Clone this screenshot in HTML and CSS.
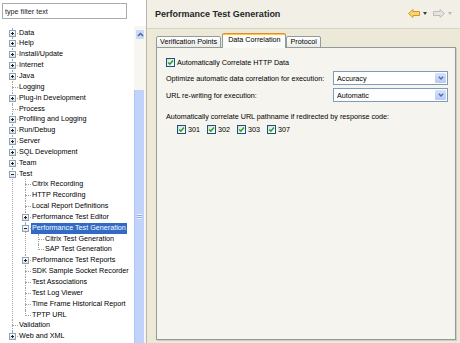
FILE: index.html
```html
<!DOCTYPE html>
<html lang="en">
<head>
  <meta charset="UTF-8" />
  <title>Preferences - Performance Test Generation</title>
  <link rel="stylesheet" href="styles.css">
</head>
<body>
  <div class="window">
    <div class="nav-pane">
      <input class="filter" type="text" value="type filter text" />
      <div class="tree-area">
        <ul class="tree">
          <li><span class="exp"></span>Data</li>
          <li><span class="exp"></span>Help</li>
          <li><span class="exp"></span>Install/Update</li>
          <li><span class="exp"></span>Internet</li>
          <li><span class="exp"></span>Java</li>
          <li>Logging</li>
          <li><span class="exp"></span>Plug-in Development</li>
          <li>Process</li>
          <li><span class="exp"></span>Profiling and Logging</li>
          <li><span class="exp"></span>Run/Debug</li>
          <li><span class="exp"></span>Server</li>
          <li><span class="exp"></span>SQL Development</li>
          <li><span class="exp"></span>Team</li>
          <li><span class="exp minus"></span>Test
            <ul>
              <li>Citrix Recording</li>
              <li>HTTP Recording</li>
              <li>Local Report Definitions</li>
              <li><span class="exp"></span>Performance Test Editor</li>
              <li><span class="exp minus"></span><span class="sel">Performance Test Generation</span>
                <ul>
                  <li>Citrix Test Generation</li>
                  <li>SAP Test Generation</li>
                </ul>
              </li>
              <li><span class="exp"></span>Performance Test Reports</li>
              <li>SDK Sample Socket Recorder</li>
              <li>Test Associations</li>
              <li>Test Log Viewer</li>
              <li>Time Frame Historical Report</li>
              <li>TPTP URL</li>
            </ul>
          </li>
          <li>Validation</li>
          <li><span class="exp"></span>Web and XML</li>
        </ul>
        <div class="vscroll">
          <div class="vscroll-btn">
            <svg width="7" height="5" viewBox="0 0 7 5"><polyline points="1,4 3.5,1.5 6,4" fill="none" stroke="#4d6185" stroke-width="1.4"/></svg>
          </div>
          <div class="vscroll-thumb"><span class="grip"></span></div>
        </div>
      </div>
    </div>

    <div class="page-pane">
      <div class="page-header">
        <h1>Performance Test Generation</h1>
        <div class="page-nav">
          <svg width="12" height="9" viewBox="0 0 12 9"><polygon points="0.5,4.5 5,0.5 5,2.5 11.5,2.5 11.5,6.5 5,6.5 5,8.5" fill="#f8d56e" stroke="#d09a2a" stroke-width="1"/></svg>
          <svg class="drop" width="4" height="3" viewBox="0 0 4 3"><polygon points="0,0 4,0 2,3" fill="#3a3a3a"/></svg>
          <svg width="12" height="9" viewBox="0 0 12 9"><polygon points="11.5,4.5 7,0.5 7,2.5 0.5,2.5 0.5,6.5 7,6.5 7,8.5" fill="#e4e4e4" stroke="#bdbdbd" stroke-width="1"/></svg>
          <svg class="drop" width="4" height="3" viewBox="0 0 4 3"><polygon points="0,0 4,0 2,3" fill="#b8b8b8"/></svg>
        </div>
      </div>

      <div class="page-body">
        <div class="tabs">
          <div class="tab">Verification Points</div>
          <div class="tab active">Data Correlation</div>
          <div class="tab">Protocol</div>
        </div>
        <div class="tab-panel">
          <label class="check">
            <span class="cb"><svg width="7" height="7" viewBox="0 0 7 7"><polyline points="1.2,3.4 2.9,5.2 6,1.6" fill="none" stroke="#21a121" stroke-width="1.5"/></svg></span>
            Automatically Correlate HTTP Data
          </label>

          <div class="options">
            <span>Optimize automatic data correlation for execution:</span>
            <div class="combo">Accuracy<span class="combo-btn"><svg width="6" height="4" viewBox="0 0 6 4"><polyline points="0.8,0.8 3,3 5.2,0.8" fill="none" stroke="#4d6ca6" stroke-width="1.3"/></svg></span></div>
            <span>URL re-writing for execution:</span>
            <div class="combo">Automatic<span class="combo-btn"><svg width="6" height="4" viewBox="0 0 6 4"><polyline points="0.8,0.8 3,3 5.2,0.8" fill="none" stroke="#4d6ca6" stroke-width="1.3"/></svg></span></div>
          </div>

          <div class="redirect-label">Automatically correlate URL pathname if redirected by response code:</div>
          <div class="codes">
            <label class="check"><span class="cb"><svg width="7" height="7" viewBox="0 0 7 7"><polyline points="1.2,3.4 2.9,5.2 6,1.6" fill="none" stroke="#21a121" stroke-width="1.5"/></svg></span>301</label>
            <label class="check"><span class="cb"><svg width="7" height="7" viewBox="0 0 7 7"><polyline points="1.2,3.4 2.9,5.2 6,1.6" fill="none" stroke="#21a121" stroke-width="1.5"/></svg></span>302</label>
            <label class="check"><span class="cb"><svg width="7" height="7" viewBox="0 0 7 7"><polyline points="1.2,3.4 2.9,5.2 6,1.6" fill="none" stroke="#21a121" stroke-width="1.5"/></svg></span>303</label>
            <label class="check"><span class="cb"><svg width="7" height="7" viewBox="0 0 7 7"><polyline points="1.2,3.4 2.9,5.2 6,1.6" fill="none" stroke="#21a121" stroke-width="1.5"/></svg></span>307</label>
          </div>
        </div>
      </div>
    </div>
  </div>
</body>
</html>
```

FILE: styles.css
```css
* {
  box-sizing: border-box;
}

body {
  margin: 0;
  font-family: 'Liberation Sans', Arial, sans-serif;
  font-size: 7.2px;
  color: #000;
  background: #ece9d8;
}

.window {
  display: flex;
  width: 460px;
  height: 343px;
  overflow: hidden;
}

/* left: filter + preference tree */
.nav-pane {
  width: 146px;
  display: flex;
  flex-direction: column;
  background: #fff;
}

.filter {
  margin: 3px 19px 0 2px;
  height: 16px;
  padding: 0 2px;
  border: 1px solid #a5acb2;
  font-family: inherit;
  font-size: 7.2px;
  color: #222;
  outline: none;
}

.tree-area {
  flex: 1;
  display: flex;
  margin-top: 7px;
  min-height: 0;
}

.tree, .tree ul {
  list-style: none;
  margin: 0;
  padding: 0;
}

.tree {
  flex: 1;
  padding: 1.6px 0 0 6px;
  overflow: hidden;
  white-space: nowrap;
}

.tree li {
  position: relative;
  padding-left: 13px;
  line-height: 10.85px;
}

.tree li::before {
  content: "";
  position: absolute;
  left: 6px;
  top: 5px;
  width: 6px;
  border-top: 1px dotted #a3a3a3;
}

.tree li::after {
  content: "";
  position: absolute;
  left: 6px;
  top: 0;
  bottom: 0;
  border-left: 1px dotted #a3a3a3;
}

.tree li:last-child::after {
  bottom: auto;
  height: 6px;
}

.exp {
  position: absolute;
  left: 3px;
  top: 2px;
  width: 7px;
  height: 7px;
  z-index: 1;
  border: 1px solid #8ba3bf;
  background:
    linear-gradient(#222, #222) center / 3px 1px no-repeat,
    linear-gradient(#222, #222) center / 1px 3px no-repeat,
    linear-gradient(#fff, #e3e0d6);
}

.exp.minus {
  background:
    linear-gradient(#222, #222) center / 3px 1px no-repeat,
    linear-gradient(#fff, #e3e0d6);
}

.sel {
  display: inline-block;
  margin-left: -1px;
  padding: 0 1px;
  background: #316ac5;
  color: #fff;
}

.vscroll {
  width: 12px;
  display: flex;
  flex-direction: column;
  background: #f7f6f1;
}

.vscroll-btn {
  margin: 4px 2px 0 2px;
  height: 9px;
  border-radius: 1px;
  background: #c9d8fb;
  display: flex;
  align-items: center;
  justify-content: center;
}

.vscroll-thumb {
  flex: 1;
  margin: 51px 2px 0 0;
  background: #c1d3fb;
  border-left: 1px solid #b2c6f3;
  display: flex;
  align-items: center;
  justify-content: center;
}

.grip {
  width: 5px;
  height: 5px;
  background: repeating-linear-gradient(#eef3ff 0 1px, #8ea8e0 1px 2px);
}

/* right: preference page */
.page-pane {
  flex: 1;
  display: flex;
  flex-direction: column;
  border-left: 1px solid #b9b6a6;
}

.page-header {
  height: 29px;
  display: flex;
  align-items: center;
  justify-content: space-between;
  padding: 0 5px 1px 8px;
  background: #f1efe6;
  border-bottom: 1px solid #d8d4c4;
}

.page-header h1 {
  margin: 0;
  font-size: 9px;
  font-weight: bold;
  color: #262626;
}

.page-nav {
  display: flex;
  align-items: center;
  gap: 3px;
}

.page-nav .drop {
  margin-right: 3px;
}

.page-body {
  flex: 1;
  display: flex;
  flex-direction: column;
  padding: 4px 4px 3px 9px;
}

.tabs {
  display: flex;
  align-items: flex-end;
  margin-bottom: -1px;
  position: relative;
}

.tab {
  height: 12px;
  padding: 0 3px;
  line-height: 10px;
  border: 1px solid #919b9c;
  border-radius: 2px 2px 0 0;
  background: linear-gradient(#fff, #ecebe6);
}

.tab + .tab {
  margin-left: -1px;
}

.tab.active {
  height: 15px;
  margin-left: 1px;
  padding: 0 5px;
  line-height: 11px;
  border-top: 1px solid #e68b2c;
  border-bottom: none;
  box-shadow: inset 0 1px #ffc73c;
  background: #fbfbf9;
  position: relative;
  z-index: 1;
}

.tab.active + .tab {
  margin-left: 0;
}

.tab-panel {
  flex: 1;
  padding: 9px 7px 0 9px;
  border: 1px solid #919b9c;
  background: #f5f4ef;
  box-shadow: 1px 1px 0 #d0cdc0;
}

.check {
  display: flex;
  align-items: center;
  gap: 2px;
  height: 10px;
}

.cb {
  width: 9px;
  height: 9px;
  border: 1px solid #1c5180;
  background: linear-gradient(135deg, #dcdcd7, #fff);
  display: flex;
  align-items: center;
  justify-content: center;
}

.options {
  display: grid;
  grid-template-columns: 1fr 115px;
  row-gap: 3px;
  align-items: center;
  margin-top: 4px;
}

.combo {
  height: 14px;
  display: flex;
  align-items: center;
  justify-content: space-between;
  padding: 0 1px 0 3px;
  border: 1px solid #7f9db9;
  background: #fff;
}

.combo-btn {
  width: 11px;
  height: 10px;
  border-radius: 1px;
  background: linear-gradient(#d6e1fb, #b8cbf5);
  display: flex;
  align-items: center;
  justify-content: center;
}

.redirect-label {
  margin-top: 10px;
  line-height: 10px;
}

.codes {
  display: flex;
  gap: 7px;
  margin-top: 2px;
  padding-left: 11px;
}
```
